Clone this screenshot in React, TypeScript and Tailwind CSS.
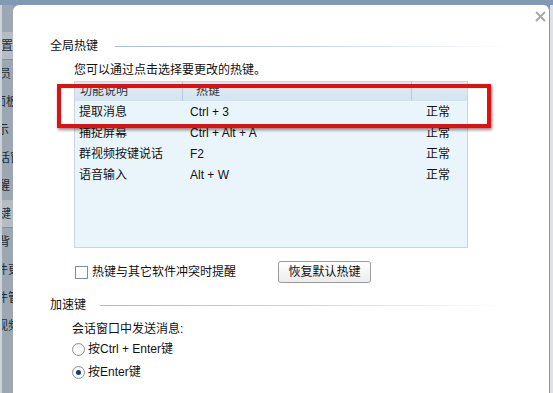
import React from 'react';

const font = { fontFamily: '"Liberation Sans", "Noto Sans CJK SC", sans-serif' };

const sideItems = [
  { text: '置', ml: '-ml-[1px]', hl: true },
  { text: '员', ml: '-ml-[3px]' },
  { text: '面板', ml: '-ml-[8px]' },
  { text: '示', ml: '-ml-[5px]' },
  { text: '话窗', ml: '-ml-[4px]' },
  { text: '醒', ml: '-ml-[4px]' },
  { text: '键', ml: '-ml-[3px]', hl: true },
  { text: '背', ml: '-ml-[4px]' },
  { text: '件更', ml: '-ml-[6px]' },
  { text: '件管', ml: '-ml-[6px]' },
  { text: '视频', ml: '-ml-[6px]' },
];

const hotkeys = [
  { name: '提取消息', key: 'Ctrl + 3', state: '正常' },
  { name: '捕捉屏幕', key: 'Ctrl + Alt + A', state: '正常' },
  { name: '群视频按键说话', key: 'F2', state: '正常' },
  { name: '语音输入', key: 'Alt + W', state: '正常' },
];

function Sidebar() {
  return (
    <div className="w-[13px] shrink-0 bg-[#9ca7b2] border-l-2 border-[#cdd3d9] pt-[27px] text-[12px] text-[#222c36]">
      {sideItems.map((it, i) => (
        <div
          key={i}
          className={`h-[28px] flex items-center overflow-hidden whitespace-nowrap leading-[16px] ${
            it.hl ? 'bg-[#b4bcc4] border-b border-[#85909b]' : ''
          }`}
        >
          <span className={it.ml}>{it.text}</span>
        </div>
      ))}
    </div>
  );
}

function SectionTitle({ title, gap, mr }: { title: string; gap: string; mr: string }) {
  return (
    <div className="flex items-center h-[16px] pl-[37px]">
      <span className="leading-[16px]">{title}</span>
      <div className={`flex-1 h-px bg-gradient-to-r from-[#a9bccb] via-[#c9d6e0] to-transparent ${gap} ${mr}`} />
    </div>
  );
}

function Radio({ checked, label }: { checked?: boolean; label: string }) {
  return (
    <div className="flex items-center h-[16px] pl-[59px]">
      <div className="w-[13px] h-[13px] rounded-full border border-[#8a939c] bg-gradient-to-b from-[#f4f4f4] to-white flex items-center justify-center">
        {checked && <div className="w-[5px] h-[5px] rounded-full bg-[#1d3a66]" />}
      </div>
      <span className="ml-[3px] leading-[16px]">{label}</span>
    </div>
  );
}

function Dialog() {
  return (
    <div className="relative flex-1 bg-white rounded-t-[6px] border-r border-[#8f959b] text-[12px] text-[#111]" style={font}>
      <button className="absolute right-[3px] top-[5px] w-[12px] h-[12px] flex items-center justify-center">
        <svg width="11" height="11" viewBox="0 0 11 11">
          <path d="M1 1 L10 10 M10 1 L1 10" stroke="#a6a6a6" strokeWidth="1.8" />
        </svg>
      </button>

      <div className="pt-[33px]">
        <SectionTitle title="全局热键" gap="ml-[17px]" mr="mr-[40px]" />
        <div className="mt-[8px] pl-[61px] leading-[16px]">您可以通过点击选择要更改的热键。</div>

        <div className="mt-[3px] ml-[61px] w-[394px] h-[167px] border border-[#c6d7e4] bg-[#eaf5fb]">
          <div className="flex h-[19px] bg-gradient-to-b from-[#dfecf5] to-[#d4e4ef] text-[#2a3542] leading-[19px]">
            <div className="w-[108px] pl-[5px] border-r border-[#b9ccdb]">功能说明</div>
            <div className="w-[229px] pl-[13px] border-r border-[#b9ccdb]">热键</div>
            <div className="flex-1" />
          </div>
          {hotkeys.map((h) => (
            <div key={h.name} className="flex h-[21px] items-center leading-[16px]">
              <div className="w-[108px] pl-[4px]">{h.name}</div>
              <div className="w-[229px] pl-[7px]">{h.key}</div>
              <div className="flex-1 pl-[14px]">{h.state}</div>
            </div>
          ))}
        </div>

        <div className="mt-[13px] flex items-center h-[22px] pl-[62px]">
          <div className="w-[203px] flex items-center">
            <div className="w-[13px] h-[13px] border border-[#7f8e9c] bg-white" />
            <span className="ml-[4px] leading-[16px]">热键与其它软件冲突时提醒</span>
          </div>
          <button className="w-[93px] h-[22px] rounded-[3px] border border-[#9b9b9b] bg-gradient-to-b from-white to-[#ececec] text-[12px] text-[#111] leading-[16px]">
            恢复默认热键
          </button>
        </div>

        <div className="mt-[14px]">
          <SectionTitle title="加速键" gap="ml-[14px]" mr="mr-[44px]" />
        </div>
        <div className="mt-[8px] pl-[59px] leading-[16px]">会话窗口中发送消息:</div>
        <div className="mt-[4px]">
          <Radio label="按Ctrl + Enter键" />
        </div>
        <div className="mt-[7px]">
          <Radio checked label="按Enter键" />
        </div>
      </div>

      <div className="absolute left-[44px] top-[79px] w-[434px] h-[44px] border-[4px] border-[#e0100f] shadow-[1px_2px_3px_rgba(0,0,0,0.45)]" />
    </div>
  );
}

export default function App() {
  return (
    <div className="w-[553px] h-[393px] overflow-hidden flex flex-col bg-[#8199b2]" style={font}>
      <div className="h-[5px] shrink-0" />
      <div className="flex flex-1 min-h-0">
        <Sidebar />
        <Dialog />
        <div className="w-[3px] shrink-0 bg-[#dde2e7]" />
      </div>
    </div>
  );
}
